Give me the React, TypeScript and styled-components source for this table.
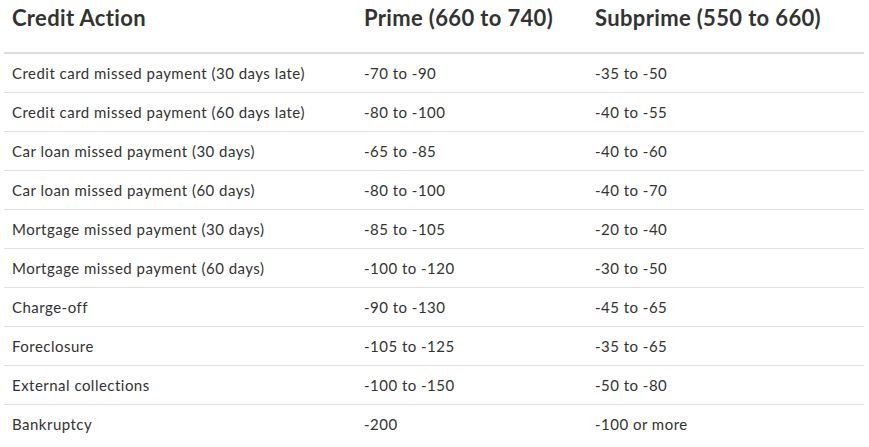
import React from "react";
import styled, { createGlobalStyle } from "styled-components";

const Global = createGlobalStyle`
  html, body { margin: 0; padding: 0; background: #ffffff; }
  body { font-family: "Lato", "Open Sans", sans-serif; color: #333333; }
`;

const Wrap = styled.div`
  padding: 0 5px 0 4px;
`;

const Table = styled.table`
  width: 860px;
  border-collapse: collapse;
  table-layout: fixed;
`;

const HeadCell = styled.th<{ $w: number }>`
  width: ${(p) => p.$w}px;
  text-align: left;
  vertical-align: top;
  font-size: 22px;
  font-weight: 700;
  letter-spacing: 0.35px;
  color: #333333;
  height: 53px;
  box-sizing: border-box;
  padding: 4px 8px 0 8px;
  line-height: 28px;
  border-bottom: 2px solid #dddddd;
`;

const Row = styled.tr`
  border-bottom: 1px solid #e0e0e0;
  &:last-child { border-bottom: none; }
`;

const Cell = styled.td`
  font-size: 15px;
  letter-spacing: 0.48px;
  color: #333333;
  height: 38px;
  padding: 0 8px;
  line-height: 20px;
  vertical-align: middle;
`;

const rows: [string, string, string][] = [
  ["Credit card missed payment (30 days late)", "-70 to -90", "-35 to -50"],
  ["Credit card missed payment (60 days late)", "-80 to -100", "-40 to -55"],
  ["Car loan missed payment (30 days)", "-65 to -85", "-40 to -60"],
  ["Car loan missed payment (60 days)", "-80 to -100", "-40 to -70"],
  ["Mortgage missed payment (30 days)", "-85 to -105", "-20 to -40"],
  ["Mortgage missed payment (60 days)", "-100 to -120", "-30 to -50"],
  ["Charge-off", "-90 to -130", "-45 to -65"],
  ["Foreclosure", "-105 to -125", "-35 to -65"],
  ["External collections", "-100 to -150", "-50 to -80"],
  ["Bankruptcy", "-200", "-100 or more"],
];

export default function App() {
  return (
    <>
      <Global />
      <Wrap>
        <Table>
          <thead>
            <tr>
              <HeadCell $w={352}>Credit Action</HeadCell>
              <HeadCell $w={231}>Prime (660 to 740)</HeadCell>
              <HeadCell $w={277}>Subprime (550 to 660)</HeadCell>
            </tr>
          </thead>
          <tbody>
            {rows.map((r) => (
              <Row key={r[0]}>
                <Cell>{r[0]}</Cell>
                <Cell>{r[1]}</Cell>
                <Cell>{r[2]}</Cell>
              </Row>
            ))}
          </tbody>
        </Table>
      </Wrap>
    </>
  );
}
